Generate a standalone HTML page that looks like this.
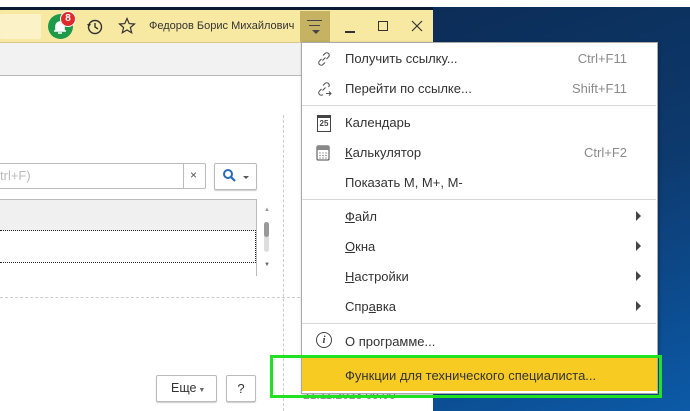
<!DOCTYPE html><html><head><meta charset="utf-8"><style>
body{margin:0;width:690px;height:411px;overflow:hidden;position:relative;font-family:"Liberation Sans",sans-serif;background:#fff}
.a{position:absolute}
.mi{position:absolute;left:345px;font-size:13px;color:#333}
.sc{position:absolute;right:63px;font-size:13px;color:#8a8a8a}
.ar{position:absolute;left:636px;width:0;height:0;border-left:5px solid #444;border-top:5px solid transparent;border-bottom:5px solid transparent}
.sep{position:absolute;left:302px;width:354px;height:1px;background:#d8d8d8}
u{text-decoration:underline}
</style></head><body>
<div class="a" style="left:0;top:7px;width:690px;height:404px;background:linear-gradient(160deg,#0b2447 0%,#0d3a6e 60%,#0c5aa8 100%)"></div>
<div class="a" style="left:0;top:7px;width:433px;height:3px;background:#0b1a33"></div>
<div class="a" style="left:0;top:10px;width:433px;height:401px;background:#fff"></div>
<div class="a" style="left:0;top:10px;width:433px;height:32px;background:#f8e9a2;border-bottom:1px solid #d8c98a"></div>
<div class="a" style="left:0;top:14px;width:41px;height:25px;background:#fbf2c8;border-radius:2px"></div>
<div class="a" style="left:48px;top:14px;width:25px;height:25px;border-radius:50%;background:#1e9a4a"></div>
<svg class="a" style="left:52px;top:19px" width="16" height="16"><path d="M4 12 V7 a4 4 0 0 1 8 0 V12 Z M2 12 H14 M6 14 h4" stroke="#fff" stroke-width="1.6" fill="#fff"/></svg>
<div class="a" style="left:60px;top:11px;width:14px;height:14px;border-radius:50%;background:#e02b2b;color:#fff;font-size:10px;font-weight:bold;text-align:center;line-height:14px;border:1px solid #fff">8</div>
<svg class="a" style="left:86px;top:18px" width="18" height="18"><circle cx="9" cy="9" r="6.5" stroke="#333" stroke-width="1.4" fill="none"/><path d="M9 5V9L12 11" stroke="#333" stroke-width="1.4" fill="none"/><path d="M1 6 L3 9 L5 6Z" fill="#333"/></svg>
<svg class="a" style="left:118px;top:17px" width="18" height="18"><path d="M9 1.5 L11.2 6.6 16.5 7 12.4 10.5 13.7 15.8 9 13 4.3 15.8 5.6 10.5 1.5 7 6.8 6.6Z" fill="none" stroke="#333" stroke-width="1.2"/></svg>
<div class="a" style="left:149px;top:20px;font-size:11px;color:#333">Федоров Борис Михайлович</div>
<div class="a" style="left:300px;top:11px;width:30px;height:31px;background:#c5b363"></div>
<div class="a" style="left:307px;top:20px;width:15px;height:1px;background:#444"></div>
<div class="a" style="left:309px;top:25px;width:11px;height:1px;background:#444"></div>
<div class="a" style="left:312px;top:30px;border-top:4px solid #444;border-left:4px solid transparent;border-right:4px solid transparent"></div>
<div class="a" style="left:345px;top:31px;width:10px;height:1.5px;background:#333"></div>
<div class="a" style="left:378px;top:21px;width:8px;height:8px;border:1.3px solid #333"></div>
<svg class="a" style="left:411px;top:20px" width="12" height="12"><path d="M1 1L11 11M11 1L1 11" stroke="#333" stroke-width="1.2"/></svg>
<div class="a" style="left:0;top:43px;width:433px;height:32px;background:#f2f2f2;border-bottom:1px solid #b8b8b8"></div>
<div class="a" style="left:283px;top:115px;height:296px;border-left:1px dashed #ccc"></div>
<div class="a" style="left:-2px;top:163px;width:206px;height:24px;border:1px solid #bbb;border-radius:2px"></div>
<div class="a" style="left:0;top:168px;font-size:13px;color:#bbb">trl+F)</div>
<div class="a" style="left:183px;top:163px;width:1px;height:26px;background:#bbb"></div>
<div class="a" style="left:190px;top:168px;font-size:12px;color:#555">×</div>
<div class="a" style="left:214px;top:163px;width:41px;height:25px;border:1px solid #bbb;border-radius:2px;box-shadow:0 1px 1px #ccc"></div>
<svg class="a" style="left:222px;top:168px" width="14" height="14"><circle cx="6" cy="6" r="4" stroke="#2a6ab8" stroke-width="2" fill="none"/><path d="M9 9L13 13" stroke="#2a6ab8" stroke-width="2.2"/></svg>
<div class="a" style="left:243px;top:176px;border-top:3px solid #555;border-left:3px solid transparent;border-right:3px solid transparent"></div>
<div class="a" style="left:0;top:199px;width:256px;height:31px;background:#f0f0f0;border-top:1px solid #bbb"></div>
<div class="a" style="left:0;top:230px;width:255px;height:31px;border:1px dotted #222;border-left:none"></div>
<div class="a" style="left:256px;top:199px;width:1px;height:77px;background:#bbb"></div>
<div class="a" style="left:264px;top:222px;width:5px;height:30px;background:#ddd;border-radius:3px"></div>
<div class="a" style="left:264px;top:222px;width:5px;height:15px;background:#999;border-radius:3px"></div>
<div class="a" style="left:264px;top:207px;font-size:6px;color:#999">▲</div>
<div class="a" style="left:264px;top:262px;font-size:6px;color:#666">▼</div>
<div class="a" style="left:0;top:297px;width:300px;border-top:1px dashed #ccc"></div>
<div class="a" style="left:156px;top:375px;width:59px;height:25px;border:1px solid #bbb;border-radius:2px;box-shadow:0 1px 1px #ccc;font-size:12.5px;color:#333;line-height:25px"><span style="margin-left:14px">Еще</span><span style="font-size:7px;color:#666"> ▼</span></div>
<div class="a" style="left:226px;top:375px;width:28px;height:25px;border:1px solid #bbb;border-radius:2px;box-shadow:0 1px 1px #ccc;font-size:13px;color:#333;line-height:25px;text-align:center">?</div>
<div class="a" style="left:303px;top:388px;font-size:12px;color:#888">21.11.2023 09:00</div>
<div class="a" style="left:301px;top:42px;width:355px;height:350px;background:#fff;border:1px solid #aaa;box-shadow:1px 1px 3px rgba(0,0,0,.3)"></div>
<svg class="a" style="left:316px;top:51px" width="16" height="16"><path d="M7 4.5 L9 2.5 a2.3 2.3 0 0 1 3.5 3.5 L10.5 8 M5.5 8 L3.5 10 a2.3 2.3 0 0 0 3.5 3.5 L9 11.5 M6.5 9.5 L9.5 6.5" stroke="#555" stroke-width="1.1" fill="none"/></svg>
<svg class="a" style="left:316px;top:81px" width="16" height="16"><path d="M7 4.5 L9 2.5 a2.3 2.3 0 0 1 3.5 3.5 M5.5 8 L3.5 10 a2.3 2.3 0 0 0 3.5 3.5 M6.5 9.5 L9.5 6.5 M10 12.5 H15 M13 10.5 L15 12.5 13 14.5" stroke="#555" stroke-width="1.1" fill="none"/></svg>
<div class="mi" style="top:51px">Получить ссылку...</div><div class="sc" style="top:51px">Ctrl+F11</div>
<div class="mi" style="top:81px">Перейти по ссылке...</div><div class="sc" style="top:81px">Shift+F11</div>
<div class="sep" style="top:105px"></div>
<div class="a" style="left:317px;top:115px;width:12px;height:13px;border:1px solid #444;border-top-width:3px;font-size:8px;font-weight:bold;color:#444;text-align:center;line-height:11px">25</div>
<svg class="a" style="left:316px;top:145px" width="14" height="16"><rect x="1" y="1" width="12" height="14" rx="1" fill="none" stroke="#444"/><rect x="1" y="1" width="12" height="4" fill="#888"/><path d="M3.5 8h1M6.5 8h1M9.5 8h1M3.5 10.5h1M6.5 10.5h1M9.5 10.5h1M3.5 13h1M6.5 13h1M9.5 13h1" stroke="#444"/></svg>
<div class="mi" style="top:115px">Календарь</div>
<div class="mi" style="top:145px"><u>К</u>алькулятор</div><div class="sc" style="top:145px">Ctrl+F2</div>
<div class="mi" style="top:175px">Показать M, M+, M-</div>
<div class="sep" style="top:199px"></div>
<div class="mi" style="top:209px"><u>Ф</u>айл</div><div class="ar" style="top:211px"></div>
<div class="mi" style="top:239px"><u>О</u>кна</div><div class="ar" style="top:241px"></div>
<div class="mi" style="top:269px"><u>Н</u>астройки</div><div class="ar" style="top:271px"></div>
<div class="mi" style="top:299px">Спр<u>а</u>вка</div><div class="ar" style="top:301px"></div>
<div class="sep" style="top:323px"></div>
<div class="a" style="left:316px;top:332px;width:14px;height:14px;border:1.3px solid #444;border-radius:50%;font:italic bold 11px 'Liberation Serif',serif;color:#444;text-align:center;line-height:14px">i</div>
<div class="mi" style="top:334px">О программе...</div>
<div class="a" style="left:302px;top:358px;width:355px;height:33px;background:#f8cb22"></div>
<div class="mi" style="top:368px">Функции для технического специалиста...</div>
<div class="a" style="left:270px;top:355px;width:386px;height:37px;border:3px solid #22e022"></div>
</body></html>
